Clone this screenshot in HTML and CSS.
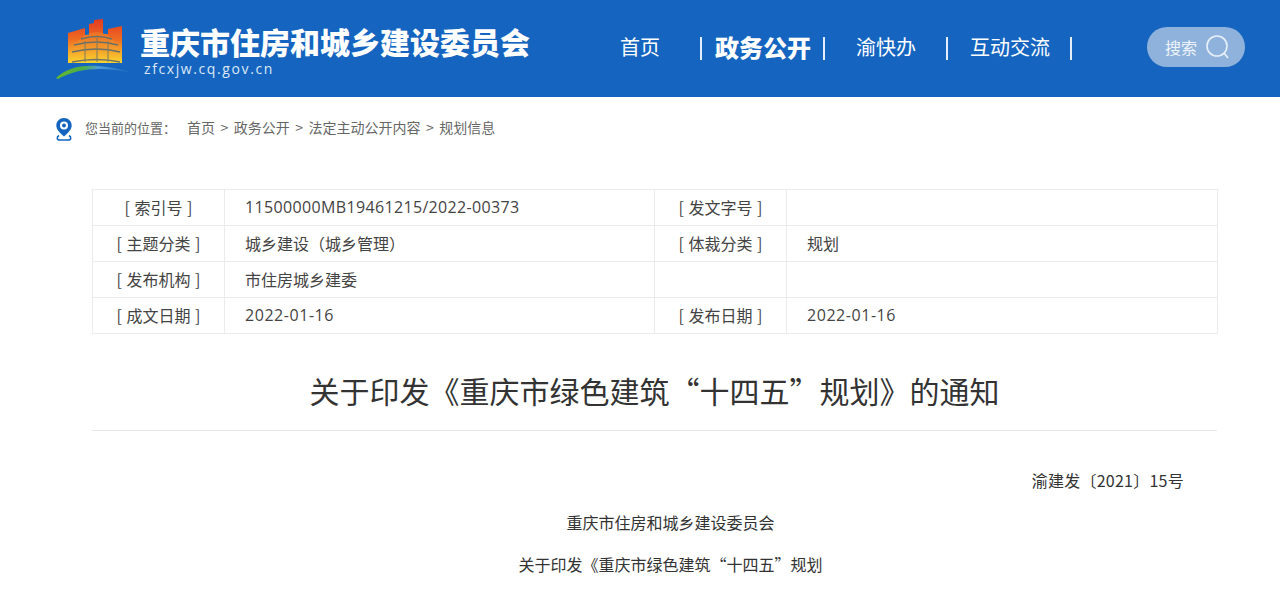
FILE: index.html
```html
<!DOCTYPE html>
<html lang="zh-CN">
<head>
<meta charset="utf-8">
<title>关于印发《重庆市绿色建筑“十四五”规划》的通知</title>
<link rel="stylesheet" href="styles.css">
</head>
<body>
<header class="top">
  <div class="brand">
    <svg class="logo" width="80" height="66" viewBox="55 14 80 66">
      <defs>
        <linearGradient id="lg" x1="0" y1="0" x2="0" y2="1">
          <stop offset="0" stop-color="#e23a20"/>
          <stop offset=".45" stop-color="#ee6a22"/>
          <stop offset=".75" stop-color="#f5a92a"/>
          <stop offset="1" stop-color="#f9d42f"/>
        </linearGradient>
        <linearGradient id="arc" x1="0" y1="0" x2="1" y2="0">
          <stop offset="0" stop-color="#62b52e"/>
          <stop offset=".35" stop-color="#4cae4a"/>
          <stop offset=".55" stop-color="#4c9bd6"/>
          <stop offset="1" stop-color="#1d69c1"/>
        </linearGradient>
      </defs>
      <path d="M68 32L85 27V34H89V23L94 22V19L103 18V33H108V28L122 25V62H68Z" fill="url(#lg)"/>
      <path d="M85 34Q98 28 108 34L118 44V50H73V44Z" fill="#f0a030" fill-opacity=".35"/>
      <path d="M81 38Q97 33 112 38M74 44Q97 38 118 44M72 51Q97 45 120 51M72 61Q97 56 120 61" stroke="#6a7068" stroke-width="1.700" fill="none"/>
      <path d="M85 40V61M97 37V61M108 40V61" stroke="#7a7a60" stroke-width="1" fill="none"/>
      <path d="M56 77C70 64 92 60 134 72C105 66 80 66 58 78Z" fill="url(#arc)"/>
    </svg>
    <div class="brand-text">
      <h1 class="site-name">重庆市住房和城乡建设委员会</h1>
      <p class="site-url">zfcxjw.cq.gov.cn</p>
    </div>
  </div>
  <nav class="nav">
    <a class="nav-item first">首页</a>
    <span class="sep"></span>
    <a class="nav-item active">政务公开</a>
    <span class="sep"></span>
    <a class="nav-item third">渝快办</a>
    <span class="sep"></span>
    <a class="nav-item fourth">互动交流</a>
    <span class="sep"></span>
  </nav>
  <div class="search">
    <span class="search-label">搜索</span>
    <svg width="26" height="26" viewBox="0 0 26 26" fill="none" stroke="#e8f0fa" stroke-width="1.600">
      <circle cx="12" cy="12" r="10"/>
      <path d="M19 19L23 24"/>
    </svg>
  </div>
</header>

<div class="crumbs">
  <svg class="pin" width="18" height="24" viewBox="0 0 18 24" fill="none">
    <path d="M9 1C4.600 1 1.300 4.300 1.300 8.400C1.300 12.600 5.400 16 9 19.400C12.600 16 16.700 12.600 16.700 8.400C16.700 4.300 13.400 1 9 1Z" fill="#1565c0"/>
    <circle cx="9" cy="8.500" r="4" fill="#fff"/>
    <circle cx="9" cy="8.500" r="2" fill="#1565c0"/>
    <path d="M4 18.500C1.500 20 1.500 23 5 23H13C16.500 23 16.500 20 14 18.500" stroke="#1565c0" stroke-width="1.500"/>
  </svg>
  <span class="here">您当前的位置：</span>
  <span>首页</span><i>&gt;</i><span>政务公开</span><i>&gt;</i><span>法定主动公开内容</span><i>&gt;</i><span>规划信息</span>
</div>

<main class="content">
  <table class="meta">
    <colgroup><col class="c1"><col class="c2"><col class="c3"><col class="c4"></colgroup>
    <tr><th>[ 索引号 ]</th><td class="code">11500000MB19461215/2022-00373</td><th>[ 发文字号 ]</th><td></td></tr>
    <tr><th>[ 主题分类 ]</th><td>城乡建设（城乡管理）</td><th>[ 体裁分类 ]</th><td>规划</td></tr>
    <tr><th>[ 发布机构 ]</th><td>市住房城乡建委</td><th></th><td></td></tr>
    <tr><th>[ 成文日期 ]</th><td class="num">2022-01-16</td><th>[ 发布日期 ]</th><td class="num">2022-01-16</td></tr>
  </table>
  <h2 class="title">关于印发《重庆市绿色建筑“十四五”规划》的通知</h2>
  <article class="body">
    <p class="doc-no">渝建发〔2021〕15号</p>
    <p class="center">重庆市住房和城乡建设委员会</p>
    <p class="center">关于印发《重庆市绿色建筑“十四五”规划</p>
  </article>
</main>
</body>
</html>
```
FILE: styles.css
```css
* { box-sizing: border-box; }
html, body { margin: 0; padding: 0; height: 590px; overflow: hidden; }
body {
  background: #fff;
  color: #333;
  font-family: "Noto Sans CJK SC", "Open Sans", "Noto Sans", sans-serif;
}
.top {
  height: 97px;
  background: #1565c0;
  display: flex;
  align-items: center;
  color: #fff;
  padding-left: 55px;
}
.brand { display: flex; align-items: center; width: 565px; }
.logo { flex: none; margin-top: -2px; }
.brand-text { margin-left: 5px; margin-top: 4px; }
.site-name { margin: 0; font-size: 30px; line-height: 36px; font-weight: 900; white-space: nowrap; }
.site-url { margin: 1px 0 0 4px; font-size: 14px; line-height: 18px; letter-spacing: 1.600px; font-family: "Open Sans", sans-serif; color: #dbe8f6; }
.nav { display: flex; align-items: center; height: 30px; font-size: 20px; }
.nav-item { line-height: 28px; padding-bottom: 4px; white-space: nowrap; }
.first { margin-right: 40px; }
.active { font-size: 24px; font-weight: 900; margin: 0 12px 0 13px; }
.third { margin: 0 30px 0 31px; }
.fourth { margin: 0 20px 0 22px; }
.sep { width: 2px; height: 23px; background: #e3eefa; }
.search {
  margin: -3px 0 0 75px;
  width: 98px;
  height: 40px;
  border-radius: 20px;
  background: #8fb2dc;
  display: flex;
  align-items: center;
  padding-left: 18px;
  gap: 8px;
  font-size: 16px;
  color: #eef4fb;
}
.search-label { padding-bottom: 1px; }
.crumbs {
  height: 60px;
  padding: 0 0 0 55px;
  display: flex;
  align-items: center;
  font-size: 14px;
  color: #666;
}
.pin { flex: none; margin-right: 12px; margin-top: 4px; }
.here { font-size: 13px; margin-right: 11px; }
.crumbs i { font-style: normal; margin: 0 5.500px; }
.content { padding: 32px 63px 0 92px; }
.meta {
  width: 1125px;
  border-collapse: collapse;
  table-layout: fixed;
  font-size: 16px;
}
.c1, .c3 { width: 132px; }
.c2 { width: 430px; }
.c4 { width: 431px; }
.meta th, .meta td {
  height: 36px;
  padding: 0 0 2px;
  border: 1px solid #ebebeb;
  font-weight: 400;
  color: #444;
}
.meta th { text-align: center; word-spacing: 1px; }
.meta td { padding-left: 20px; }
.meta .num, .meta .code { font-family: "Open Sans", sans-serif; padding-bottom: 1px; }
.meta .num { letter-spacing: .55px; }
.meta .code { letter-spacing: .35px; }
.title {
  margin: 0;
  height: 97px;
  border-bottom: 1px solid #e8e8e8;
  text-align: center;
  font-size: 30px;
  font-weight: 400;
  line-height: 112px;
  color: #333;
}
.body { font-size: 16px; line-height: 22px; color: #333; }
.body p { margin: 0; }
.doc-no { text-align: right; padding: 38px 33px 0 0; letter-spacing: .25px; }
.body .center { text-align: center; margin-top: 20px; padding-left: 32px; }
```
